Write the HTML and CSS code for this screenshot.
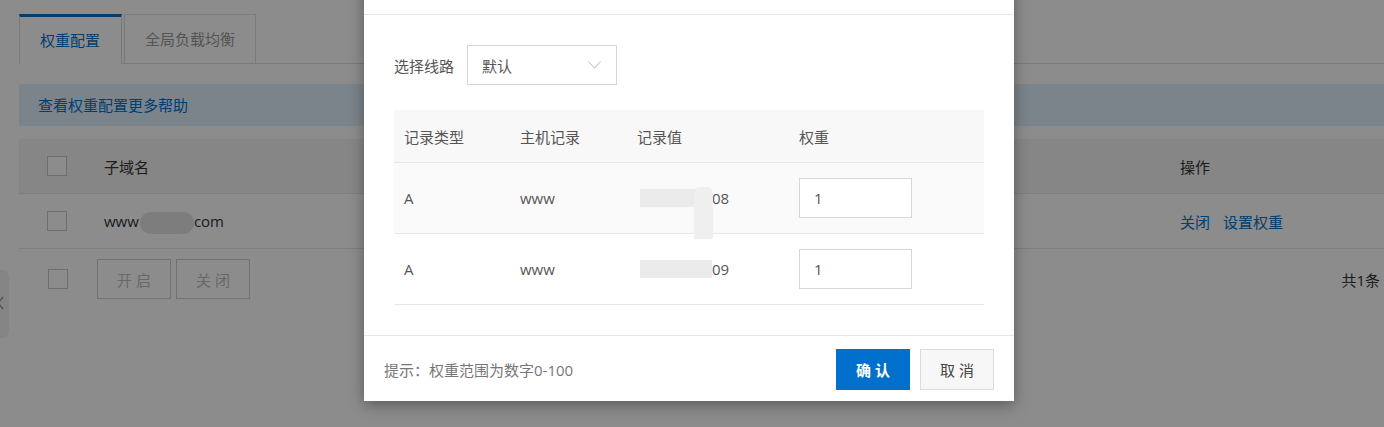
FILE: index.html
```html
<!DOCTYPE html>
<html lang="zh-CN">
<head>
<meta charset="utf-8">
<title>权重配置</title>
<link rel="stylesheet" href="styles.css">
</head>
<body>
<div class="page">
  <div class="tabs">
    <div class="tab tab-active">权重配置</div>
    <div class="tab">全局负载均衡</div>
  </div>
  <div class="help"><a class="help-link">查看权重配置更多帮助</a></div>
  <div class="grid">
    <div class="grid-row grid-head">
      <div class="c-check"><span class="cb"></span></div>
      <div class="c-name">子域名</div>
      <div class="c-op">操作</div>
    </div>
    <div class="grid-row">
      <div class="c-check"><span class="cb"></span></div>
      <div class="c-name">www<span class="smudge"></span>com</div>
      <div class="c-op"><a class="link">关闭</a><a class="link">设置权重</a></div>
    </div>
    <div class="grid-foot">
      <span class="cb cb-foot"></span>
      <button class="btn-ghost">开启</button>
      <button class="btn-ghost">关闭</button>
      <div class="total">共1条</div>
    </div>
  </div>
</div>
<div class="side-handle">
  <svg class="side-chev" width="8" height="14" viewBox="0 0 8 14"><path d="M6 1 L1 7 L6 13" fill="none" stroke="#888" stroke-width="1.2"/></svg>
</div>
<div class="mask"></div>
<div class="modal">
  <div class="modal-head"></div>
  <div class="modal-body">
    <div class="field">
      <span class="field-label">选择线路</span>
      <div class="select">
        <span class="select-value">默认</span>
        <svg class="caret" width="13" height="8" viewBox="0 0 13 8"><path d="M0.5 0.5 L6.5 7.2 L12.5 0.5" fill="none" stroke="#b8b8b8" stroke-width="1"/></svg>
      </div>
    </div>
    <div class="wtable">
      <div class="wrow whead">
        <div class="w1">记录类型</div>
        <div class="w2">主机记录</div>
        <div class="w3">记录值</div>
        <div class="w4">权重</div>
      </div>
      <div class="wrow wrow-hover">
        <div class="w1">A</div>
        <div class="w2">www</div>
        <div class="w3"><span class="redact redact-tail"></span>08</div>
        <div class="w4"><input class="winput" type="text" value="1"></div>
      </div>
      <div class="wrow">
        <div class="w1">A</div>
        <div class="w2">www</div>
        <div class="w3"><span class="redact"></span>09</div>
        <div class="w4"><input class="winput" type="text" value="1"></div>
      </div>
    </div>
  </div>
  <div class="modal-foot">
    <span class="hint">提示：权重范围为数字0-100</span>
    <div class="actions">
      <button class="btn btn-primary">确认</button>
      <button class="btn btn-default">取消</button>
    </div>
  </div>
</div>
</body>
</html>
```

FILE: styles.css
```css
html, body {
  margin: 0;
  padding: 0;
  background: #ffffff;
}
body {
  width: 1384px;
  height: 427px;
  overflow: hidden;
  position: relative;
  font-family: "Open Sans", "Noto Sans CJK SC", sans-serif;
  font-size: 15px;
  color: #333;
}
a { text-decoration: none; }
button { font-family: inherit; }

/* ---------- underlying page ---------- */
.page {
  padding: 14px 0 0 19px;
}
.tabs {
  display: flex;
  align-items: flex-start;
  height: 49px;
  border-bottom: 1px solid #dcdcdc;
}
.tab {
  box-sizing: border-box;
  height: 49px;
  margin-left: 2px;
  padding: 0 20px;
  border: 1px solid #dcdcdc;
  border-bottom: none;
  line-height: 48px;
  color: #999;
  background: #fff;
}
.tab-active {
  height: 50px;
  margin-left: 0;
  width: 103px;
  border-top: 3px solid #0070cc;
  line-height: 46px;
  color: #0070cc;
}
.help {
  margin-top: 20px;
  height: 42px;
  line-height: 42px;
  padding-left: 19px;
  background: #e0f0fc;
}
.help-link { color: #0070cc; }

.grid { margin-top: 13px; }
.grid-row {
  display: flex;
  align-items: center;
  height: 54px;
  border-bottom: 1px solid #e3e3e3;
}
.grid-head { background: #f4f4f4; }
.c-check {
  width: 85px;
  display: flex;
  align-items: center;
}
.cb {
  box-sizing: border-box;
  width: 20px;
  height: 20px;
  border: 1px solid #c8c8c8;
  background: #fff;
  margin-left: 28px;
}
.c-name { flex: 1; display: flex; align-items: center; }
.smudge {
  display: inline-block;
  width: 54px;
  height: 22px;
  margin: 4px 0 0 1px;
  border-radius: 11px;
  background: #e4e4e4;
}
.c-op { width: 204px; }
.link { color: #0070cc; margin-right: 13px; }

.grid-foot {
  display: flex;
  align-items: center;
  padding-top: 10px;
}
.cb-foot { margin-left: 29px; }
.btn-ghost {
  box-sizing: border-box;
  width: 74px;
  height: 40px;
  margin-left: 29px;
  border: 1px solid #cfcfcf;
  background: #fff;
  color: #bdbdbd;
  font-size: 15px;
  letter-spacing: 4px;
  text-indent: 4px;
}
.btn-ghost + .btn-ghost { margin-left: 5px; }
.total { margin-left: auto; padding-right: 4px; }

.side-handle {
  position: absolute;
  left: 0;
  top: 270px;
  width: 9px;
  height: 68px;
  background: #f1f1f1;
  border-radius: 0 7px 7px 0;
  overflow: hidden;
}
.side-chev { position: absolute; left: -3px; top: 26px; }

/* ---------- overlay ---------- */
.mask {
  position: absolute;
  inset: 0;
  background: rgba(0, 0, 0, 0.45);
}

/* ---------- modal ---------- */
.modal {
  position: absolute;
  left: 364px;
  top: -36px;
  width: 650px;
  background: #fff;
  box-shadow: 0 4px 14px rgba(0, 0, 0, 0.35);
  color: #555;
}
.modal-head {
  height: 50px;
  border-bottom: 1px solid #e6e6e6;
}
.modal-body {
  padding: 30px 30px 30px;
}
.field {
  display: flex;
  align-items: center;
  height: 40px;
}
.field-label { margin-right: 13px; }
.select {
  box-sizing: border-box;
  width: 150px;
  height: 40px;
  border: 1px solid #d5d5d5;
  display: flex;
  align-items: center;
  padding: 0 15px 0 14px;
}
.select-value { flex: 1; }
.caret { display: block; margin-top: -1px; }

.wtable { margin-top: 25px; }
.wrow {
  display: flex;
  align-items: center;
  height: 70px;
  border-bottom: 1px solid #e4e8ec;
}
.whead {
  height: 52px;
  background: #f8f8f8;
}
.wrow-hover { background: #fafafa; }
.w1, .w2, .w3, .w4 {
  box-sizing: border-box;
  padding-left: 10px;
  display: flex;
  align-items: center;
}
.w1 { width: 116px; }
.w2 { width: 117px; }
.w3 { width: 162px; }
.w4 { flex: 1; }
.redact {
  position: relative;
  display: inline-block;
  width: 72px;
  height: 18px;
  margin-left: 3px;
  background: #ebebeb;
}
.redact-tail::after {
  content: "";
  position: absolute;
  left: 54px;
  top: -2px;
  width: 19px;
  height: 52px;
  background: #efefef;
  border-radius: 6px 6px 0 0;
}
.winput {
  box-sizing: border-box;
  width: 113px;
  height: 40px;
  border: 1px solid #d7d7d7;
  padding: 0 14px;
  font-family: inherit;
  font-size: 15px;
  color: #555;
  background: #fff;
  outline: none;
}

.modal-foot {
  display: flex;
  align-items: center;
  justify-content: space-between;
  border-top: 1px solid #e6e6e6;
  padding: 13px 20px 11px;
}
.hint { color: #777; }
.actions { display: flex; gap: 10px; }
.btn {
  box-sizing: border-box;
  width: 74px;
  height: 41px;
  font-size: 15px;
  letter-spacing: 4px;
  text-indent: 4px;
  cursor: pointer;
}
.btn-primary {
  border: none;
  background: #0070cc;
  color: #fff;
  font-weight: 700;
}
.btn-default {
  border: 1px solid #dcdcdc;
  background: #f7f7f7;
  color: #444;
}
```
